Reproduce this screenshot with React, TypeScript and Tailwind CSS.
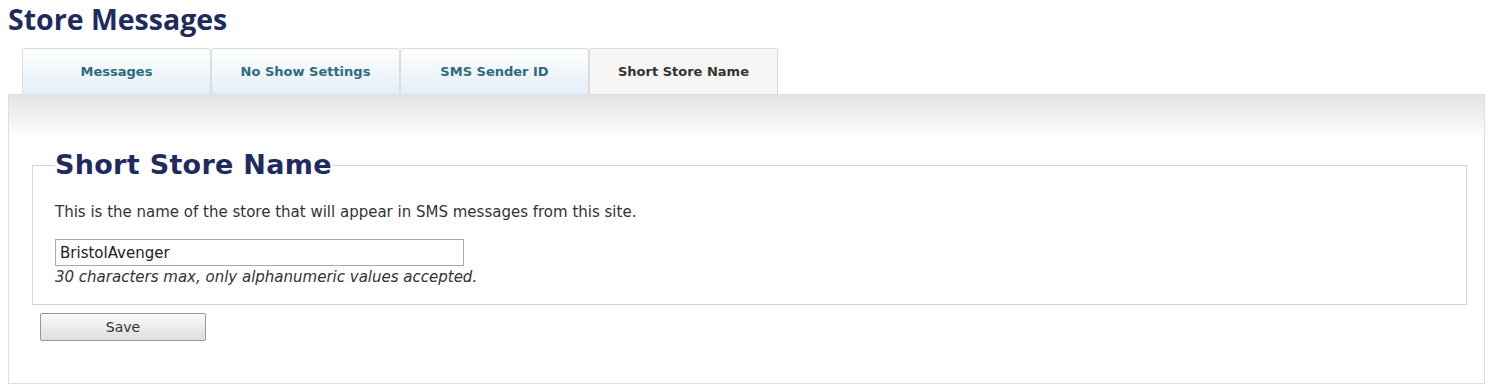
import { useState } from "react";

const tabs = ["Messages", "No Show Settings", "SMS Sender ID", "Short Store Name"];

export default function App() {
  const [active, setActive] = useState(3);
  const [name, setName] = useState("BristolAvenger");

  return (
    <div className="w-[1492px] h-[387px] bg-white pl-[8px] pr-[7px] pt-[2px] font-['DejaVu_Sans',sans-serif]">
      <h1 className="text-[28.5px] leading-[34px] font-bold text-[#1f2b5e] font-['Open_Sans',sans-serif] tracking-[0px] h-[46px]">
        Store Messages
      </h1>

      <div className="flex pl-[14px] h-[46px]">
        {tabs.map((t, i) => (
          <button
            key={t}
            onClick={() => setActive(i)}
            className={
              i === active
                ? "w-[189px] h-[46px] border border-b-0 border-[#dcdcdc] rounded-t-[3px] bg-[#f7f6f4] text-[#333] text-[13px] font-bold"
                : "w-[189px] h-[46px] border border-b-0 border-[#dcdcdc] rounded-t-[3px] bg-gradient-to-b from-white to-[#e2eef8] text-[#2e6b7b] text-[13px] font-bold"
            }
          >
            {t}
          </button>
        ))}
      </div>

      <div className="h-[290px] border border-[#dedede] bg-gradient-to-b from-[#e4e4e4] via-white via-[15%] to-white pl-[23px] pr-[17px] pt-[55px]">
        <fieldset className="border border-[#d4d4d4] pl-[22px] pr-4 pb-[17px]">
          <legend className="text-[27px] leading-[30px] font-bold text-[#1f2b5e] tracking-[0.3px]">
            Short Store Name
          </legend>
          <p className="text-[15px] text-[#333] mt-[22px] leading-[20px]">
            This is the name of the store that will appear in SMS messages from this site.
          </p>
          <input
            value={name}
            onChange={(e) => setName(e.target.value)}
            className="mt-[17px] w-[409px] h-[27px] border border-[#aaa] px-[4px] text-[15px] text-[#222] outline-none block"
          />
          <p className="text-[15px] italic text-[#333] leading-[20px] mt-[1px]">
            30 characters max, only alphanumeric values accepted.
          </p>
        </fieldset>
        <button className="ml-[8px] mt-[8px] w-[166px] h-[28px] border border-[#999] rounded-[2px] bg-gradient-to-b from-[#fafafa] to-[#dedede] text-[14px] text-[#333]">
          Save
        </button>
      </div>
    </div>
  );
}
